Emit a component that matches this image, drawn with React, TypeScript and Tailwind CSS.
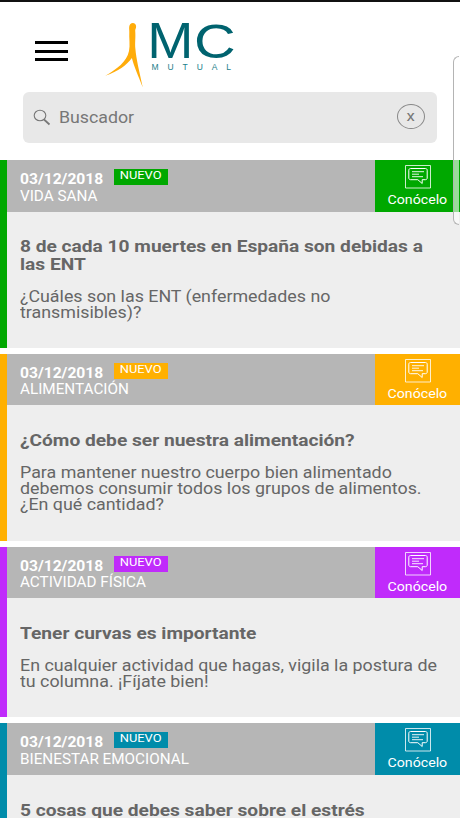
/**
 * News feed of the health app: header, search box and category cards.
 */

import { clsx } from "clsx";

type Article = {
  id: string;
  date: string;
  category: string;
  title: string[];
  summary: string[];
  accent: string;
  height: string;
};

const articles: Article[] = [
  {
    id: "ent",
    date: "03/12/2018",
    category: "VIDA SANA",
    title: ["8 de cada 10 muertes en España son debidas a", "las ENT"],
    summary: ["¿Cuáles son las ENT (enfermedades no", "transmisibles)?"],
    accent: "bg-[#00a800]",
    height: "h-[187.600px]",
  },
  {
    id: "alimentacion",
    date: "03/12/2018",
    category: "ALIMENTACIÓN",
    title: ["¿Cómo debe ser nuestra alimentación?"],
    summary: [
      "Para mantener nuestro cuerpo bien alimentado",
      "debemos consumir todos los grupos de alimentos.",
      "¿En qué cantidad?",
    ],
    accent: "bg-[#ffb000]",
    height: "h-[187px]",
  },
  {
    id: "actividad",
    date: "03/12/2018",
    category: "ACTIVIDAD FÍSICA",
    title: ["Tener curvas es importante"],
    summary: ["En cualquier actividad que hagas, vigila la postura de", "tu columna. ¡Fíjate bien!"],
    accent: "bg-[#c02bfb]",
    height: "h-[170.800px]",
  },
  {
    id: "bienestar",
    date: "03/12/2018",
    category: "BIENESTAR EMOCIONAL",
    title: ["5 cosas que debes saber sobre el estrés"],
    summary: [],
    accent: "bg-[#008caa]",
    height: "h-[188px]",
  },
];

export default function App() {
  return (
    <div className="relative h-[818px] w-[460px] overflow-hidden bg-white font-[Roboto,sans-serif]">
      <Header />
      <SearchBox />
      <main className="mt-[17px] flex flex-col gap-[6px]">
        {articles.map((a) => <ArticleCard key={a.id} article={a} />)}
      </main>
      {/* Edge panel handle, floats over the feed */}
      <div className="absolute top-[56px] left-[453px] h-[169px] w-[6px] rounded-l-[6px] border border-r-0 border-[#b4b4b4] bg-white/60" />
    </div>
  );
}

function Header() {
  return (
    <header className="flex h-[92px] border-t-2 border-[#111] pl-[35px]">
      <button aria-label="Menú" className="mt-[39px] flex h-[20px] w-[33px] flex-col justify-between">
        <span className="h-[3px] w-full bg-black" />
        <span className="h-[3px] w-full bg-black" />
        <span className="h-[3px] w-full bg-black" />
      </button>
      <Logo />
    </header>
  );
}

function Logo() {
  return (
    <svg className="mt-[18px] ml-[32px] overflow-visible" width="140" height="72" viewBox="100 20 140 72">
      <path
        d="M132.800 23.100c1.900 0 3.300 1.400 3.300 3.300 0 1.700-.9 2.600-.9 4.200.6 7.500-.5 12.500.2 18.400.8 9.500 3.800 22 7.400 38.500-4.800-12.500-8.800-21-10.900-29.500-5.700 7.500-13.300 13-26.500 17.800 11.500-6.800 21.300-14 23.600-24.800 1.300-6-.1-13 .3-19.300 0-2-.3-3.200-.1-4.900.2-2.200 1.800-3.700 3.600-3.700Z"
        fill="#ffac0a"
      />
      <g fill="#00636f" fontFamily="Liberation Sans, sans-serif">
        <text transform="translate(147.300 58) scale(1.12 1)" fontSize="49.500">M</text>
        <text transform="translate(194 57.700) scale(1.190 1)" fontSize="48.500">C</text>
        <text x="151.500" y="69.500" fontSize="8.500" textLength="79.500" lengthAdjust="spacing" fill="#1c7f8b">
          MUTUAL
        </text>
      </g>
    </svg>
  );
}

function SearchBox() {
  return (
    <div className="mx-[23px] flex h-[51px] items-center rounded-[6px] bg-[#e8e8e8] pr-[12px] pl-[10px]">
      <svg width="18" height="17" viewBox="0 0 18 17" fill="none" stroke="#777">
        <ellipse cx="7" cy="6.500" rx="5.800" ry="5.300" strokeWidth="1.100" />
        <path d="m11 10.500 5.500 5" strokeWidth="1.700" />
      </svg>
      <span className="ml-[8px] origin-left scale-x-[1.11] text-[16px] leading-none text-[#777]">
        Buscador
      </span>
      <button
        aria-label="Borrar"
        className="mb-[3px] ml-auto grid h-[25px] w-[28px] place-items-center rounded-[50%] border border-[#888] text-[15px] leading-none text-[#777]"
      >
        <span className="scale-x-[1.12]">x</span>
      </button>
    </div>
  );
}

function ArticleCard({ article }: { article: Article }) {
  return (
    <article className={clsx("flex shrink-0", article.height)}>
      <div className={clsx("w-[7px] shrink-0", article.accent)} />
      <div className="flex-1 bg-[#eee]">
        <div className="flex h-[51.500px] bg-[#b6b6b6] text-white">
          <div className="flex-1 pt-[9px] pl-[12.500px]">
            <div className="flex h-[19.500px]">
              <span className="w-[94px] pt-[3px]">
                <span className="block w-max origin-left scale-x-[1.115] text-[14px] leading-[15px] font-bold">
                  {article.date}
                </span>
              </span>
              <span className={clsx("flex h-[16px] w-[54px] justify-center", article.accent)}>
                <span className="scale-x-[1.12] text-[11.500px] leading-[13px]">NUEVO</span>
              </span>
            </div>
            <span className="block w-max origin-left scale-x-[1.09] text-[14px] leading-[15px]">
              {article.category}
            </span>
          </div>
          <button className={clsx("flex w-[85px] flex-col items-center pt-[5px]", article.accent)}>
            <ChatIcon />
            <span className="mt-[3px] scale-x-[1.09] text-[13px] leading-[15px]">Conócelo</span>
          </button>
        </div>

        <div className="pt-[26.700px] pl-[12.500px] text-[#666]">
          <h2 className="text-[16.500px] leading-[17.500px] font-bold">
            {article.title.map((line) => (
              <span key={line} className="block w-max origin-left scale-x-[1.16]">{line}</span>
            ))}
          </h2>
          <p className="mt-[15.500px] text-[16px] leading-[16px]">
            {article.summary.map((line) => (
              <span key={line} className="block w-max origin-left scale-x-[1.114]">{line}</span>
            ))}
          </p>
        </div>
      </div>
    </article>
  );
}

function ChatIcon() {
  return (
    <svg width="26" height="24" viewBox="0 0 26 24" fill="none" stroke="currentColor">
      <path d="M.5.5h25v22.500H.5z" strokeWidth=".8" />
      <path d="M5.500 3.500h15c1 0 1.700.7 1.700 1.700v7.800c0 1-.7 1.700-1.700 1.700h-3.300v3.800l-4.400-3.800H5.500c-1 0-1.700-.7-1.700-1.700V5.200c0-1 .7-1.700 1.700-1.700Z" />
      <path d="M7 6.700h12M7 9.200h7M7 11.700h11" strokeWidth=".9" />
    </svg>
  );
}
